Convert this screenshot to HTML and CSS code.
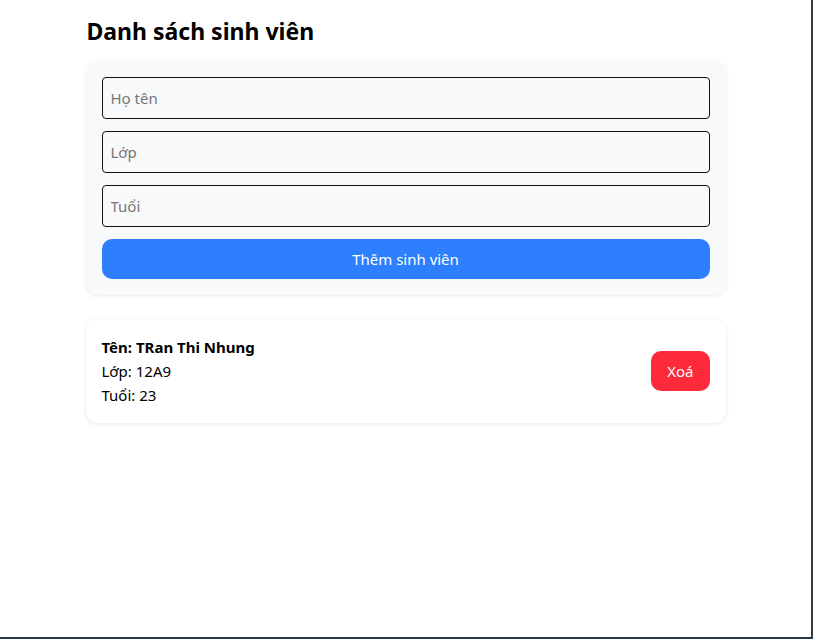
FILE: index.html
```html
<!DOCTYPE html>
<html lang="vi">
<head>
<meta charset="utf-8">
<title>Danh sách sinh viên</title>
<link rel="stylesheet" href="styles.css">
</head>
<body>
<div class="frame">
  <main class="app">
    <h2 class="title">Danh sách sinh viên</h2>
    <form class="form-card">
      <input class="field" type="text" placeholder="Họ tên">
      <input class="field" type="text" placeholder="Lớp">
      <input class="field" type="text" placeholder="Tuổi">
      <button class="btn-add" type="button">Thêm sinh viên</button>
    </form>
    <ul class="list">
      <li class="student">
        <div class="info">
          <div class="name">Tên: TRan Thi Nhung</div>
          <div>Lớp: 12A9</div>
          <div>Tuổi: 23</div>
        </div>
        <button class="btn-del" type="button">Xoá</button>
      </li>
    </ul>
  </main>
</div>
</body>
</html>
```
FILE: styles.css
```css
html, body {
  margin: 0;
  padding: 0;
  background: #3a3a3a;
}
body {
  font-family: "Noto Sans", "Open Sans", sans-serif;
  color: #000;
}
.frame {
  width: 811px;
  height: 637px;
  background: #fff;
  border-bottom: 2px solid #263845;
  overflow: hidden;
}
.app {
  width: 640px;
  margin: 0 auto;
  padding-top: 1px;
}
.title {
  font-size: 23px;
  font-weight: 700;
  margin: 14px 0 14px 1px;
  line-height: 32px;
}
.form-card {
  background: #f8f9fb;
  border-radius: 12px;
  box-shadow: 0 1px 4px rgba(0, 0, 0, 0.09);
  padding: 16px;
  display: flex;
  flex-direction: column;
  gap: 12px;
}
.field {
  height: 42px;
  box-sizing: border-box;
  border: 1.5px solid #111;
  border-radius: 4px;
  background: #f8f9fb;
  padding: 0 8px;
  font: 15px "Noto Sans", sans-serif;
  color: #333;
}
.field::placeholder {
  color: #777;
}
.btn-add {
  height: 40px;
  border: none;
  border-radius: 10px;
  background: #2e7ffd;
  color: #fff;
  font: 15px "Noto Sans", sans-serif;
}
.list {
  list-style: none;
  margin: 24px 0 0;
  padding: 0;
}
.student {
  background: #fff;
  border-radius: 12px;
  box-shadow: 0 1px 4px rgba(0, 0, 0, 0.1);
  padding: 16px;
  display: flex;
  align-items: center;
  justify-content: space-between;
  font-size: 15px;
  line-height: 24px;
}
.name {
  font-weight: 700;
}
.btn-del {
  height: 40px;
  padding: 0 16px;
  border: none;
  border-radius: 10px;
  background: #fd2a3a;
  color: #fff;
  font: 15px "Noto Sans", sans-serif;
}
```
